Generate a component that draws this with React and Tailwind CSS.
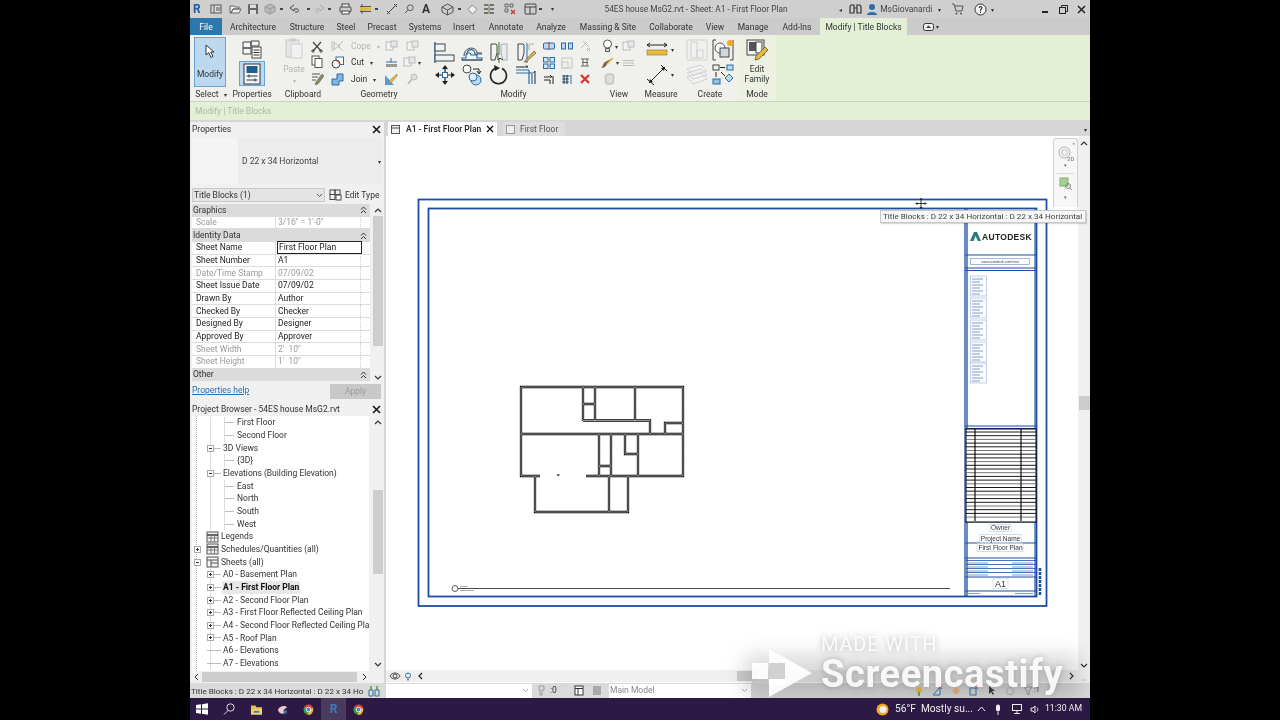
import React from "react";

const Svg = ({ w = 16, h = 16, vb, children, className = "" }) => (
  <svg width={w} height={h} viewBox={vb || `0 0 ${w} ${h}`} fill="none" className={className}>{children}</svg>
);
const Drop = () => <span className="text-[6px] leading-none text-[#333]">▾</span>;
const Dot = () => <span className="block h-[2px] w-[3px] bg-[#444]" />;

/* ---------- quick access icons ---------- */
const qa = {
  info: <Svg w={12} h={12}><rect x="1" y="2" width="10" height="8" stroke="#555" fill="#ddd" /><path d="M4 2v8M6 5h4M6 7h4" stroke="#555" /></Svg>,
  open: <Svg w={13} h={12}><path d="M1 3h4l1 1h4v2H4L2 10H1zM2 10l2-4h8l-2 4z" stroke="#666" fill="#eee" /></Svg>,
  save: <Svg w={12} h={12}><rect x="1" y="1" width="10" height="10" rx="1" fill="#666" /><rect x="3" y="1.500" width="6" height="3.500" fill="#ddd" /><rect x="3" y="7" width="6" height="4" fill="#ddd" /></Svg>,
  sync: <Svg w={12} h={12}><path d="M6 1l5 2.500v5L6 11 1 8.500v-5z" fill="#bbb" stroke="#999" /><path d="M1 3.500 6 6l5-2.500M6 6v5" stroke="#999" /></Svg>,
  undo: <Svg w={12} h={12}><path d="M5 2 1 5l4 3V6h3c2 0 2 3 0 3H6" stroke="#444" /></Svg>,
  redo: <Svg w={12} h={12}><path d="M7 2l4 3-4 3V6H4c-2 0-2 3 0 3h2" stroke="#aaa" /></Svg>,
  print: <Svg w={13} h={12}><rect x="3" y="1" width="7" height="4" stroke="#444" fill="#eee" /><rect x="1" y="4" width="11" height="5" rx="1" stroke="#444" fill="#ccc" /><rect x="3" y="8" width="7" height="3" stroke="#444" fill="#fff" /></Svg>,
  thin: <Svg w={13} h={10}><path d="M1 2.500h11M1 7.500h11M3 0v10" stroke="#555" /><rect x="1" y="3.500" width="11" height="3" fill="#e0b83a" /></Svg>,
  dim: <Svg w={12} h={12}><path d="M1 11 11 1M1 8l3 3M8 1l3 3" stroke="#444" /></Svg>,
  tag: <Svg w={12} h={12}><circle cx="7.500" cy="4.500" r="3.500" stroke="#444" /><path d="M5 7l-4 4" stroke="#444" /></Svg>,
  home: <Svg w={13} h={13}><path d="M6.500 1 12 4v5l-5.500 3L1 9V4z" stroke="#555" fill="#ccc" /><path d="M1 4l5.500 3L12 4M6.500 7v5" stroke="#555" /></Svg>,
  sec: <Svg w={11} h={11}><path d="M5.500 1 10 5.500 5.500 10 1 5.500z" stroke="#888" fill="#eee" /></Svg>,
  thinb: <Svg w={12} h={12}><path d="M1 2h4M1 6h4M1 10h4M7 2h4M7 6h4M7 10h4" stroke="#555" strokeWidth="1.600" /><path d="M6 1v10" stroke="#5a8a3c" /></Svg>,
  closew: <Svg w={13} h={12}><path d="M1 1h3v3H1zM6 1h3v3H6zM1 6h3v3H1z" stroke="#666" /><path d="M7 7l4 4m0-4-4 4" stroke="#c33" strokeWidth="1.300" /></Svg>,
  swit: <Svg w={13} h={12}><rect x="1" y="1" width="11" height="10" rx="1" stroke="#444" /><path d="M1 4h11M6 4v7" stroke="#444" /></Svg>,
};

/* ---------- ribbon icons ---------- */
const Cursor = () => <Svg w={12} h={15}><path d="M2 1v10l2.700-2.300L7 13.500l2-1L6.700 8H10z" fill="#fff" stroke="#333" /></Svg>;
const TypeProps = () => <Svg w={22} h={20}><path d="M2 3h8v6H2zM2 9h8v6H2zM10 2h8v5h-8z" stroke="#444" fill="#f4f4f4" /><rect x="11" y="8" width="9" height="11" stroke="#444" fill="#fff" /><path d="M12.500 11h6M12.500 13.500h6M12.500 16h6" stroke="#333" /></Svg>;
const PropsBig = () => <Svg w={18} h={22}><rect x="1" y="1" width="16" height="20" stroke="#333" fill="#f4f7fa" /><rect x="3.500" y="3" width="11" height="7" fill="#1f5f8b" /><path d="M3.500 13h11M3.500 17h11" stroke="#333" /><path d="M6 11.500v3M12 15.500v3" stroke="#333" /></Svg>;
const Paste = () => <Svg w={18} h={21}><rect x="1" y="2" width="13" height="17" stroke="#c9c9c9" fill="#e6e6e6" /><rect x="6" y="6" width="11" height="14" stroke="#cfcfcf" fill="#f1f1f1" /><rect x="4" y="0.500" width="7" height="3" fill="#ccc" /></Svg>;
const Scissors = ({ c = "#444" }) => <Svg w={12} h={12}><path d="M2 1l8 9M10 1l-8 9" stroke={c} strokeWidth="1.200" /><circle cx="2" cy="10" r="1.200" stroke={c} /><circle cx="10" cy="10" r="1.200" stroke={c} /></Svg>;
const Copy = () => <Svg w={12} h={13}><rect x="1" y="1" width="7" height="9" stroke="#555" fill="#fff" /><rect x="4" y="3.500" width="7" height="9" stroke="#555" fill="#fff" /></Svg>;
const Match = () => <Svg w={13} h={13}><path d="M1 2h8M1 5h6M1 8h4" stroke="#555" /><path d="M11 2 5 10l-1 3 3-1 6-8z" fill="#8a8a5a" stroke="#555" strokeWidth="0.500" /></Svg>;
const Cope = () => <Svg w={13} h={12}><path d="M1 1v10M3 1v10M3 3l6 3-6 3M12 1 7 6l5 5" stroke="#bdbdbd" /></Svg>;
const CutG = () => <Svg w={13} h={13}><rect x="5" y="1" width="7.500" height="7.500" stroke="#2e6da4" fill="#fff" /><circle cx="5" cy="8" r="4" stroke="#444" fill="#fff" /><path d="M5 5h3v3" stroke="#c33" /></Svg>;
const JoinG = () => <Svg w={13} h={13}><path d="M6 1h6v7H8v4H1V6h5z" fill="#7fb7e0" stroke="#2e6da4" /></Svg>;
const Small = ({ c = "#bbb" }) => <Svg w={13} h={12}><rect x="1" y="2" width="7" height="8" stroke={c} fill="#f3f3f3" /><rect x="6" y="1" width="6" height="6" stroke={c} fill="#e6e6e6" /></Svg>;
const Align = () => <Svg w={21} h={21}><path d="M1 0v21" stroke="#2a6aa5" strokeWidth="1.400" /><rect x="1" y="2" width="10" height="7" stroke="#444" fill="#eef3f7" /><rect x="1" y="13" width="19" height="6" stroke="#444" fill="#eef3f7" /></Svg>;
const Offset = () => <Svg w={22} h={18}><path d="M1 15h4v-3c0-3 5-3 5 0h6v3h5v2H1zM6 12c0-7 8-7 8-1h7" stroke="#2a6aa5" fill="#eef5fa" strokeWidth="1.100" /><path d="M1 17h20M3 13c0-10 13-10 13-3h5" stroke="#444" /></Svg>;
const Mirror1 = () => <Svg w={20} h={21}><path d="M2 2h5l1 1v8l-2 7H2z" stroke="#444" fill="#f3f3f3" /><path d="M10 0v21" stroke="#5a9a4a" strokeWidth="1.300" /><path d="M18 2h-5l-1 1v8l2 7h4z" stroke="#aaa" fill="#e6edf3" /><path d="M9 11v7l2-2 3 2" stroke="#333" fill="#fff" /></Svg>;
const Mirror2 = () => <Svg w={20} h={21}><path d="M2 2h5l1 1v8l-2 7H2z" stroke="#444" fill="#f3f3f3" /><path d="M11 1v20" stroke="#2a6aa5" /><path d="M18 2h-4l-1 1v5" stroke="#aaa" /><path d="M8 20l10-11 2 2-10 9z" fill="#e8b93a" stroke="#555" strokeWidth="0.700" /></Svg>;
const Move = () => <Svg w={22} h={22}><path d="M11 1l3 4H8zM11 21l3-4H8zM1 11l4-3v6zM21 11l-4-3v6z" fill="#222" /><path d="M11 5v12M5 11h12" stroke="#222" strokeWidth="1.200" /><rect x="8.500" y="8.500" width="5" height="5" fill="#fff" stroke="#2a6aa5" /></Svg>;
const CopyM = () => <Svg w={22} h={22}><circle cx="6" cy="5" r="4" stroke="#444" fill="#fff" /><path d="M12 5h6v4M16 7l2 3 2-3" stroke="#222" /><circle cx="15" cy="16" r="5" stroke="#2a6aa5" fill="#bcd9f0" /><circle cx="12" cy="13" r="4" stroke="#2a6aa5" fill="#e0eef9" /></Svg>;
const Rotate = () => <Svg w={20} h={22}><path d="M6 4.500a8 8 0 1 0 7 0" stroke="#222" strokeWidth="1.500" /><path d="M5 1l6 3-5 3z" fill="#222" /></Svg>;
const Trim = () => <Svg w={22} h={20}><path d="M1 5h13M1 8h16v11M14 5v14" stroke="#2a6aa5" strokeWidth="1.200" /><path d="M1 2h12l-2-1.500M20 19V6l-1.500 2" stroke="#222" /></Svg>;
const Mini = ({ k }) => {
  const m = {
    split: <Svg w={12} h={8}><rect x="0.500" y="1" width="11" height="6" rx="1" fill="#bcd9f0" stroke="#2a6aa5" /><path d="M6 0v8" stroke="#c33" /></Svg>,
    gap: <Svg w={12} h={8}><rect x="0.500" y="1" width="4" height="6" fill="#bcd9f0" stroke="#2a6aa5" /><rect x="7.500" y="1" width="4" height="6" fill="#bcd9f0" stroke="#2a6aa5" /></Svg>,
    pin: <Svg w={12} h={12}><path d="M4 1l6 6M8 2 2 8" stroke="#bbb" /><path d="M8 8l3 3m0-3-3 3" stroke="#d8a0a0" /></Svg>,
    arr: <Svg w={12} h={12}><rect x="0.500" y="0.500" width="4.500" height="4.500" stroke="#2a6aa5" fill="#d6e8f6" /><rect x="7" y="0.500" width="4.500" height="4.500" stroke="#2a6aa5" fill="#d6e8f6" /><rect x="0.500" y="7" width="4.500" height="4.500" stroke="#2a6aa5" fill="#d6e8f6" /><rect x="7" y="7" width="4.500" height="4.500" stroke="#2a6aa5" fill="#d6e8f6" /></Svg>,
    scale: <Svg w={12} h={12}><rect x="1" y="1" width="10" height="10" stroke="#c5c5c5" /><rect x="1" y="5" width="6" height="6" stroke="#c5c5c5" fill="#eee" /></Svg>,
    pinn: <Svg w={12} h={11}><path d="M2 2h8M2 9h8M3 5.500h6M4 2v7M8 2v7" stroke="#666" /></Svg>,
    unp: <Svg w={12} h={11}><path d="M1 3h8l-2-2M1 6h6v4M10 2v8" stroke="#222" /></Svg>,
    ung: <Svg w={12} h={11}><path d="M1 2h10M1 5h7M1 8h7M10 3v7" stroke="#2a6aa5" /><path d="M3 1v9M6 1v9" stroke="#222" /></Svg>,
    del: <Svg w={10} h={10}><path d="M1 1l8 8M9 1 1 9" stroke="#d8322e" strokeWidth="2.200" /></Svg>,
  };
  return m[k];
};
const Bulb = () => <Svg w={11} h={14}><circle cx="5.500" cy="5" r="4" stroke="#555" fill="#fff" /><path d="M3.500 9.500h4v3h-4z" stroke="#555" fill="#ddd" /></Svg>;
const Brush = () => <Svg w={14} h={12}><path d="M13 1 7 7 5 5zM5 5l2 2c-1 3-4 4-6 4 2-1 2-5 4-6z" fill="#7a6a3a" /><path d="M13 1 7 7" stroke="#e0b83a" strokeWidth="1.500" /></Svg>;
const Clip = () => <Svg w={11} h={12}><rect x="1.500" y="1" width="8" height="10" rx="3" stroke="#c4c4c4" strokeWidth="1.500" fill="#ddd" /></Svg>;
const Tape = () => <Svg w={22} h={15}><path d="M1 3h20M1 3l3-2M1 3l3 2M21 3l-3-2M21 3l-3 2" stroke="#222" /><rect x="1" y="8" width="20" height="5" fill="#e8bb3e" stroke="#8a7420" strokeWidth="0.600" /></Svg>;
const DimIcon = () => <Svg w={22} h={22}><path d="M3 19 19 3M1 15l7 6M15 1l6 6" stroke="#222" /><path d="M3 19l1-4 3 3zM19 3l-1 4-3-3z" fill="#222" /></Svg>;
const Create1 = () => <Svg w={22} h={22}><rect x="1" y="1" width="20" height="20" rx="1" stroke="#d0d0d0" /><path d="M5 3h6v16H5zM11 11h6v8h-6z" stroke="#cfcfcf" fill="#f1f1f1" /></Svg>;
const Create2 = () => <Svg w={22} h={22}><path d="M4 1H1v20h3M18 21h3V1" stroke="#444" /><circle cx="8" cy="9" r="5" stroke="#555" fill="#fff" /><rect x="8" y="9" width="9" height="9" fill="#cfd8df" stroke="#444" /><circle cx="18" cy="4" r="3" fill="#f2a81d" /></Svg>;
const Create3 = () => <Svg w={24} h={24}><path d="M2 6l14-4 6 6-14 4zM2 10l14-4 6 6-14 4zM2 14l14-4 6 6-14 5z" stroke="#d0d0d0" fill="#f1f1f1" /></Svg>;
const Create4 = () => <Svg w={22} h={22}><rect x="1" y="1" width="6" height="5" stroke="#444" /><path d="M8 3.500h5" stroke="#222" /><rect x="15" y="1" width="6" height="5" stroke="#2a6aa5" fill="#bcd9f0" /><path d="M4 8v5M9 8l4 4" stroke="#222" /><rect x="1" y="15" width="7" height="5" fill="#8fc1e6" stroke="#2a6aa5" /><path d="M17 10l4 4-4 4-4-4z" fill="#bcd9f0" stroke="#2a6aa5" /></Svg>;
const EditFam = () => <Svg w={22} h={22}><rect x="1" y="1" width="17" height="15" stroke="#444" fill="#f3f3f3" /><rect x="3" y="3" width="7" height="9" fill="#555" /><rect x="10" y="3" width="6" height="11" stroke="#444" fill="#fff" /><path d="M9 21l1-4 9-9 3 3-9 9z" fill="#e8bb3e" stroke="#444" strokeWidth="0.700" /></Svg>;

const Cell = ({ children, className = "" }) => <div className={`flex items-center justify-center ${className}`}>{children}</div>;

const Panel = ({ className, label, children, labelNode }) => (
  <div className={`flex flex-col ${className}`}>
    <div className="flex h-[52px] min-w-0 pt-[2px]">{children}</div>
    <div className="flex h-[14px] items-center justify-center text-[8.500px] text-[#333]">{labelNode || label}</div>
  </div>
);

const SmallRow = ({ icon, text, gray, drop }) => (
  <div className={`flex h-[16.500px] items-center gap-[6px] text-[8.500px] ${gray ? "text-[#b5b5b5]" : "text-[#333]"}`}>
    <Cell className="w-[15px]">{icon}</Cell>
    <span>{text}</span>
    {drop && <span className="text-[6px]">▾</span>}
  </div>
);

const tabs = [
  ["Architecture", "w-[54px]"], ["Structure", "w-[54px]"], ["Steel", "w-[24px]"], ["Precast", "w-[48px]"], ["Systems", "w-[38px]"], ["Insert", "w-[40px]"],
  ["Annotate", "w-[44px]"], ["Analyze", "w-[46px]"], ["Massing & Site", "w-[68px]"], ["Collaborate", "w-[58px]"], ["View", "w-[30px]"], ["Manage", "w-[46px]"], ["Add-Ins", "w-[42px]"],
];

const propRows = [
  ["h", "Graphics"],
  ["r", "Scale", "3/16\" = 1'-0\"", true],
  ["h", "Identity Data"],
  ["e", "Sheet Name", "First Floor Plan"],
  ["r", "Sheet Number", "A1"],
  ["r", "Date/Time Stamp", "07/09/02", true],
  ["r", "Sheet Issue Date", "07/09/02"],
  ["r", "Drawn By", "Author"],
  ["r", "Checked By", "Checker"],
  ["r", "Designed By", "Designer"],
  ["r", "Approved By", "Approver"],
  ["r", "Sheet Width", "2'  10\"", true],
  ["r", "Sheet Height", "1'  10\"", true],
  ["h", "Other"],
];

const Chev = () => <Svg w={7} h={8}><path d="M1 3.500 3.500 1 6 3.500M1 7 3.500 4.500 6 7" stroke="#333" /></Svg>;
const Up = () => <Svg w={8} h={6}><path d="M1 5 4 2l3 3" stroke="#333" strokeWidth="1.200" /></Svg>;
const Down = () => <Svg w={8} h={6}><path d="M1 1l3 3 3-3" stroke="#333" strokeWidth="1.200" /></Svg>;
const X = () => <Svg w={9} h={9}><path d="M1 1l7 7M8 1 1 8" stroke="#111" strokeWidth="1.500" /></Svg>;

const Plus = ({ minus }) => (
  <span className="relative flex h-[7px] w-[7px] items-center justify-center border border-[#aaa] bg-white">
    <span className="h-px w-[3px] bg-[#333]" />
    {!minus && <span className="absolute h-[3px] w-px bg-[#333]" />}
  </span>
);

const tree = [
  [1, "First Floor", 3, null],
  [2, "Second Floor", 3, null],
  [3, "3D Views", 2, "m"],
  [4, "{3D}", 3, null],
  [5, "Elevations (Building Elevation)", 2, "m"],
  [6, "East", 3, null],
  [7, "North", 3, null],
  [8, "South", 3, null],
  [9, "West", 3, null],
  [10, "Legends", 1, null, "leg"],
  [11, "Schedules/Quantities (all)", 1, "p", "sch"],
  [12, "Sheets (all)", 1, "m", "sht"],
  [13, "A0 - Basement Plan", 2, "p"],
  [14, "A1 - First Floor Plan", 2, "p", null, true],
  [15, "A2 - Second Floor Plan", 2, "p"],
  [16, "A3 - First Floor Reflected Ceiling Plan", 2, "p"],
  [17, "A4 - Second Floor Reflected Ceiling Plan", 2, "p"],
  [18, "A5 - Roof Plan", 2, "p"],
  [19, "A6 - Elevations", 2, null],
  [20, "A7 - Elevations", 2, null],
];

const TreeIcon = ({ k }) => (
  <Svg w={13} h={12}>
    <rect x="1" y="1" width="11" height="10" stroke="#555" fill="#f3f3f3" />
    <path d="M1 4h11" stroke="#555" strokeWidth={k === "sht" ? 1 : 1.800} />
    {k !== "sht" && <path d="M1 7h11M5 4v7M8.500 4v7" stroke="#777" />}
    {k === "sht" && <path d="M5 4v7M5 7h7" stroke="#555" />}
  </Svg>
);

const wall =
  "M540 476H521V387H683V476H586 M535 476V512H628V476 M609 476V512 M583 387V421 M595 387V421 M583 404H595 M635 387V421 M583 420.500H650V434 M521 434H683 M665 434V423H683 M599 434V476 M611 434V476 M599 466H611 M625 434V454H638 M638 434V476";

const Rows = () => {
  const ys = [];
  for (let y = 432; y < 520; y += 3.7) ys.push(y);
  return ys.map((y, i) => <path key={i} d={`M966 ${y}H1036`} stroke={i % 3 === 2 ? "#666" : "#000"} strokeWidth="0.900" />);
};

const Sheet = () => (
  <svg width="692" height="532" viewBox="386 136 692 532" className="block" fontFamily="Liberation Sans, sans-serif">
    <rect x="418.500" y="199.500" width="628" height="406.500" stroke="#1d4ea3" strokeWidth="1.800" fill="#fff" />
    <rect x="428.500" y="208.500" width="608" height="388" stroke="#1d4ea3" strokeWidth="1.800" fill="none" />
    <path d="M965 208.500V597M967 208.500V597" stroke="#1d4ea3" strokeWidth="1.300" />
    <path d="M965 255H1037M965 268H1037M965 270.500H1037M965 426H1037M965 428.500H1037M965 522H1037M965 543H1037M965 558H1037M965 577H1037M965 591H1037M1035 208.500V597" stroke="#1d4ea3" strokeWidth="1.100" />
    <path d="M970 241l4-9h3l4 9h-3l-2.500-5-2 5z" fill="#2a7a7a" />
    <text x="982" y="239.500" fontSize="8.500" fontWeight="700" fill="#222" letterSpacing="0.300">AUTODESK</text>
    <rect x="970.500" y="258.500" width="59" height="6" fill="#fff" stroke="#7a9fd0" strokeWidth="0.700" />
    <text x="1000" y="263" fontSize="3.500" textAnchor="middle" fill="#345">www.autodesk.com/revit</text>
    {[276, 298, 320, 342, 363].map((y) => (
      <g key={y}>
        <rect x="970.500" y={y} width="16" height="20" fill="#f8fbff" stroke="#9ab5da" strokeWidth="0.600" />
        {[3, 6, 9, 12, 15, 18].map((d) => <path key={d} d={`M972 ${y + d}H${980 + (d % 2) * 3}`} stroke="#5a79a8" strokeWidth="0.700" />)}
      </g>
    ))}
    <rect x="966" y="429" width="70" height="93" fill="#fff" stroke="#000" strokeWidth="1" />
    <Rows />
    <path d="M975 429V521M1021 429V521" stroke="#000" strokeWidth="1.100" />
    <rect x="990" y="524.500" width="21" height="7" fill="#fff" stroke="#b5c6e0" strokeWidth="0.600" />
    <text x="1000.500" y="530" fontSize="6.500" textAnchor="middle" fill="#334">Owner</text>
    <rect x="980" y="534.500" width="41" height="8" fill="#fff" stroke="#b5c6e0" strokeWidth="0.600" />
    <text x="1000.500" y="541" fontSize="6.500" textAnchor="middle" fill="#334">Project Name</text>
    <rect x="977" y="543.500" width="46" height="8" fill="#fff" stroke="#b5c6e0" strokeWidth="0.600" />
    <text x="1000.500" y="549.500" fontSize="6.500" textAnchor="middle" fill="#334">First Floor Plan</text>
    {[563, 567, 571, 575].map((y) => (
      <g key={y}>
        <path d={`M966 ${y - 2.500}H1036`} stroke="#1d4ea3" strokeWidth="0.800" />
        <path d={`M968 ${y}H988M1012 ${y}H1033`} stroke="#7a9fd0" strokeWidth="1" />
      </g>
    ))}
    <rect x="993" y="578.500" width="15" height="10" fill="#fff" stroke="#c5d3e8" strokeWidth="0.600" />
    <text x="1000.500" y="587" fontSize="9" textAnchor="middle" fill="#334">A1</text>
    <path d="M968 593.500H980M1015 593.500H1033" stroke="#7a9fd0" strokeWidth="1" />
    <path d="M1040 568v28" stroke="#1d4ea3" strokeWidth="2.600" strokeDasharray="3 1" />
    <path d="M452 588.500H950" stroke="#333" strokeWidth="0.900" />
    <circle cx="455" cy="588.500" r="3" fill="#fff" stroke="#333" strokeWidth="0.800" />
    <path d="M460 586.500h8M460 590.500h14" stroke="#999" strokeWidth="0.800" />
    <path d={wall} stroke="#000" strokeWidth="2.300" fill="none" />
    <path d={wall} stroke="#fff" strokeWidth="0.600" fill="none" />
    <rect x="557" y="474" width="2.500" height="2" fill="#666" />
    <path d="M921 198v11M915.500 203.500h11" stroke="#222" strokeWidth="0.900" />
    <path d="M921 198l-1.500 2h3zM921 209l-1.500-2h3zM915.500 203.500l2-1.500v3zM926.500 203.500l-2-1.500v3z" fill="#222" />
  </svg>
);

const Logo = () => (
  <Svg w={64} h={50}>
    <path d="M19 0 62 24 19 48z" fill="#fff" fillOpacity="0.92" />
    <rect x="2" y="14" width="16" height="16" fill="#fff" fillOpacity="0.92" />
    <rect x="2" y="30" width="16" height="6" fill="#bdbdbd" fillOpacity="0.8" />
    <path d="M19 14h16v16H19z" fill="#c9c9c9" fillOpacity="0.85" />
    <path d="M35 30H19v6h16z" fill="#fff" />
  </Svg>
);

const Chrome = () => (
  <Svg w={11} h={11}>
    <circle cx="5.500" cy="5.500" r="5" fill="#d8473a" />
    <path d="M5.500 5.500 1 3v5l2.500 2.500 2 0z" fill="#3d9c52" />
    <path d="M5.500 5.500 10 4v3l-2 3.500-3 .5z" fill="#e8b93a" />
    <circle cx="5.500" cy="5.500" r="2.300" fill="#4a86c8" stroke="#fff" strokeWidth="0.800" />
  </Svg>
);

export default function App() {
  return (
    <div className="flex h-[720px] w-[1280px] overflow-hidden bg-black font-['Roboto','Noto_Sans',sans-serif] text-[8.500px] text-[#333]">
      <div className="w-[190px] shrink-0 bg-black" />
      <div className="relative flex w-[900px] shrink-0 flex-col overflow-hidden bg-white blur-[0.3px]">
        {/* Title bar */}
        <div className="flex h-[18px] shrink-0 items-center bg-[#cfcfcf]">
          <div className="flex w-[415px] items-center pl-[3px]">
            <span className="w-[17px] text-[12px] font-bold leading-none text-[#1e5c9e]">R</span>
            <Cell className="w-[12px]">{qa.info}</Cell>
            <Cell className="ml-[5px] w-[17px]">{qa.open}</Cell>
            <Cell className="w-[17px]">{qa.save}</Cell>
            <Cell className="w-[17px]">{qa.sync}</Cell>
            <Cell className="w-[7px]"><Dot /></Cell>
            <Cell className="w-[20px]">{qa.undo}</Cell>
            <Cell className="w-[7px]"><Dot /></Cell>
            <Cell className="w-[14px]">{qa.redo}</Cell>
            <Cell className="w-[7px]"><Dot /></Cell>
            <Cell className="w-[24px]">{qa.print}</Cell>
            <Cell className="w-[16px]">{qa.thin}</Cell>
            <Cell className="w-[7px]"><Dot /></Cell>
            <Cell className="w-[24px]">{qa.dim}</Cell>
            <Cell className="w-[10px]">{qa.tag}</Cell>
            <span className="w-[24px] text-center text-[12px] font-bold leading-none text-[#333]">A</span>
            <Cell className="w-[18px]">{qa.home}</Cell>
            <Cell className="w-[7px]"><Dot /></Cell>
            <Cell className="w-[18px]">{qa.sec}</Cell>
            <Cell className="w-[16px]">{qa.thinb}</Cell>
            <Cell className="w-[26px]">{qa.closew}</Cell>
            <Cell className="w-[14px]">{qa.swit}</Cell>
            <Cell className="w-[7px]"><Dot /></Cell>
            <Cell className="w-[16px]"><Drop /></Cell>
          </div>
          <span className="w-[235px] whitespace-nowrap text-[8.300px] text-[#444]">54ES house MsG2.rvt - Sheet: A1 - First Floor Plan</span>
          <span className="w-[10px] text-[6px]">◂</span>
          <Svg w={13} h={12}><path d="M1 10V4l1-2h3v8zM8 10V2h3l1 2v6zM5 5h3" stroke="#333" strokeWidth="1.200" /></Svg>
          <Cell className="ml-[3px] w-[13px]"><Svg w={12} h={13}><circle cx="6" cy="4" r="3" fill="#2e6da4" /><path d="M1 12c0-4 10-4 10 0z" fill="#2e6da4" /></Svg></Cell>
          <span className="ml-[2px] w-[58px] text-[8.500px] text-[#444]">MsGiovanardi</span>
          <span className="w-[10px] text-[6px]">▾</span>
          <Cell className="ml-[3px] w-[13px]"><Svg w={13} h={12}><path d="M1 1h2l2 7h6l1-5H4" stroke="#555" /><circle cx="5.500" cy="10.500" r="1" fill="#555" /><circle cx="10" cy="10.500" r="1" fill="#555" /></Svg></Cell>
          <Cell className="ml-[9px] w-[14px]"><Svg w={13} h={13}><circle cx="6.500" cy="6.500" r="5.500" stroke="#333" fill="#f1f1f1" /><text x="6.500" y="9.500" fontSize="8.500" fontWeight="700" textAnchor="middle" fill="#333">?</text></Svg></Cell>
          <span className="ml-[4px] w-[45px] text-[6px]">▾</span>
          <Cell className="w-[18px]"><span className="mt-[6px] h-[2px] w-[6px] bg-[#222]" /></Cell>
          <Cell className="w-[18px]"><Svg w={9} h={9}><rect x="0.500" y="2.500" width="6" height="6" stroke="#222" /><path d="M2.500 2.500v-2h6v6h-2" stroke="#222" /></Svg></Cell>
          <Cell className="w-[18px]"><Svg w={9} h={9}><path d="M1 1l7 7M8 1 1 8" stroke="#222" strokeWidth="1.500" /></Svg></Cell>
        </div>

        {/* Tabs */}
        <div className="flex h-[17px] shrink-0 items-stretch bg-[#cbcbcb] text-[8.500px]">
          <div className="flex w-[32px] items-center justify-center bg-[#2a78ae] pt-[1px] text-white">File</div>
          <div className="w-[4px]" />
          {tabs.map(([t, w]) => (
            <div key={t} className={`flex items-center justify-center whitespace-nowrap pt-[1px] text-[#333] ${w}`}>{t}</div>
          ))}
          <div className="ml-[2px] flex w-[87px] items-center justify-center whitespace-nowrap bg-[#e3f0d6] pt-[1px] text-[#333]">Modify | Title Blocks</div>
          <div className="ml-[16px] flex items-center gap-[2px]">
            <Svg w={11} h={8}><rect x="0.500" y="0.500" width="10" height="7" rx="2" stroke="#333" fill="#eee" /><path d="M3 5h5L5.500 2.500z" fill="#333" /></Svg>
            <span className="text-[6px]">▾</span>
          </div>
        </div>

        {/* Ribbon */}
        <div className="flex h-[67px] shrink-0 border-b border-[#c9d3bf] bg-[#e3f0d6]">
          <div className="flex w-[548px] bg-[#f0f1ed]">
            <Panel className="ml-[4px] w-[34px]" labelNode={<span>Select <span className="ml-[3px] text-[6px]">▾</span></span>}>
              <div className="flex h-[50px] w-[32px] flex-col items-center border border-[#6aa3d5] bg-[#bcd9f0] pt-[6px] text-[8.500px]">
                <Cursor />
                <span className="mt-[9px]">Modify</span>
              </div>
            </Panel>
            <Panel className="ml-[3px] w-[42px]" label="Properties">
              <div className="flex w-full flex-col items-center">
                <Cell className="h-[24px]"><TypeProps /></Cell>
                <div className="flex h-[25px] w-[26px] items-center justify-center border border-[#6aa3d5] bg-[#bcd9f0]"><PropsBig /></div>
              </div>
            </Panel>
            <Panel className="ml-[7px] w-[46px]" label="Clipboard">
              <div className="flex w-[28px] flex-col items-center text-[#b5b5b5]">
                <Cell className="h-[22px]"><Paste /></Cell>
                <span className="mt-[4px] text-[8.500px]">Paste</span>
                <span className="text-[6px]">▾</span>
              </div>
              <div className="flex w-[18px] flex-col items-center">
                <Cell className="h-[16.500px] pt-[3px]"><Scissors /></Cell>
                <Cell className="h-[16.500px]"><Copy /></Cell>
                <Cell className="h-[16.500px]"><Match /></Cell>
              </div>
            </Panel>
            <Panel className="ml-[4px] w-[98px]" label="Geometry">
              <div className="w-[52px] pt-[1px]">
                <SmallRow icon={<Cope />} text="Cope" gray drop />
                <SmallRow icon={<CutG />} text="Cut" drop />
                <SmallRow icon={<JoinG />} text="Join" drop />
              </div>
              <div className="w-[18px] pt-[1px]">
                <Cell className="h-[16.500px]"><Small /></Cell>
                <Cell className="h-[16.500px]"><Svg w={13} h={12}><path d="M1 5h11M6 1v4" stroke="#2a6aa5" /><rect x="1" y="7" width="11" height="3" fill="#999" /></Svg></Cell>
                <Cell className="h-[16.500px]"><Svg w={14} h={13}><path d="M1 12V2l9 10z" fill="#5a9bd5" /><path d="M13 1 5 8v2h2l6-7z" fill="#e8b93a" stroke="#666" strokeWidth="0.500" /></Svg></Cell>
              </div>
              <div className="flex w-[24px] flex-col pt-[1px]">
                <Cell className="h-[16.500px]"><Small /></Cell>
                <Cell className="h-[16.500px] gap-[2px]"><Small /><span className="text-[6px]">▾</span></Cell>
                <Cell className="h-[16.500px]"><Svg w={12} h={12}><circle cx="8" cy="4" r="3" stroke="#bbb" fill="#ddd" /><path d="M6 6l-4 5" stroke="#bbb" strokeWidth="1.800" /></Svg></Cell>
              </div>
            </Panel>
            <Panel className="ml-[3px] w-[165px]" label="Modify">
              <div className="grid w-[109px] shrink-0 grid-cols-4 grid-rows-2 pt-[2px]">
                <Cell className="h-[26px]"><Align /></Cell><Cell className="h-[26px]"><Offset /></Cell><Cell className="h-[26px]"><Mirror1 /></Cell><Cell className="h-[26px]"><Mirror2 /></Cell>
                <Cell className="h-[24px]"><Move /></Cell><Cell className="h-[24px]"><CopyM /></Cell><Cell className="h-[24px]"><Rotate /></Cell><Cell className="h-[24px]"><Trim /></Cell>
              </div>
              <div className="grid w-[54px] shrink-0 grid-cols-3 pt-[1px]">
                {["split", "gap", "pin", "arr", "scale", "pinn", "unp", "ung", "del"].map((k) => (
                  <Cell key={k} className="h-[16.500px]"><Mini k={k} /></Cell>
                ))}
              </div>
            </Panel>
            <Panel className="ml-[4px] w-[38px]" label="View">
              <div className="grid w-full grid-cols-2 pt-[1px]">
                <Cell className="h-[16.500px] gap-[2px]"><Bulb /><span className="text-[6px]">▾</span></Cell>
                <Cell className="h-[16.500px]"><Small /></Cell>
                <Cell className="h-[16.500px] gap-[2px]"><Brush /><span className="text-[6px]">▾</span></Cell>
                <Cell className="h-[16.500px]"><Svg w={13} h={8}><path d="M1 1.500h11M1 4h11M1 6.500h11" stroke="#bbb" /></Svg></Cell>
                <Cell className="h-[16.500px]"><Clip /></Cell>
              </div>
            </Panel>
            <Panel className="ml-[4px] w-[38px]" label="Measure">
              <div className="flex flex-col pl-[4px]">
                <div className="flex h-[25px] items-center gap-[3px]"><Tape /><span className="text-[6px]">▾</span></div>
                <div className="flex h-[25px] items-center gap-[3px]"><DimIcon /><span className="text-[6px]">▾</span></div>
              </div>
            </Panel>
            <Panel className="ml-[4px] w-[52px]" label="Create">
              <div className="grid w-full grid-cols-2 justify-items-center">
                <Cell className="h-[25px]"><Create1 /></Cell><Cell className="h-[25px]"><Create2 /></Cell>
                <Cell className="h-[25px]"><Create3 /></Cell><Cell className="h-[25px]"><Create4 /></Cell>
              </div>
            </Panel>
          </div>
          <Panel className="w-[38px] bg-[#ecf1e4]" label="Mode">
            <div className="flex w-full flex-col items-center text-[8.500px] leading-[10px]">
              <Cell className="h-[25px]"><EditFam /></Cell>
              <span className="mt-[2px]">Edit</span>
              <span>Family</span>
            </div>
          </Panel>
        </div>

        {/* Context bar */}
        <div className="flex h-[18px] shrink-0 items-center bg-[#e3f0d6] pl-[5px] text-[8.500px] text-[#b3b3a8]">Modify | Title Blocks</div>

        {/* Body */}
        <div className="flex min-h-0 flex-1 bg-[#d6d6d6] pt-[2px]">
          {/* Left column */}
          <div className="flex w-[194px] shrink-0 flex-col">
            <div className="flex h-[281px] flex-col bg-[#f0f0f0]">
              <div className="flex h-[14px] items-center justify-between pl-[2px] pr-[3px] text-[8.500px]">
                <span>Properties</span><X />
              </div>
              <div className="mx-[2px] mt-[2px] flex h-[46px] items-center bg-[#ececec]">
                <div className="h-[46px] w-[46px] bg-[#f4f4f4]" />
                <span className="ml-[4px] flex-1 text-[8.500px] text-[#444]">D 22 x 34 Horizontal</span>
                <span className="mr-[1px] text-[6px]">▾</span>
              </div>
              <div className="mt-[4px] flex h-[14px] items-center">
                <div className="ml-[2px] flex h-[14px] w-[133px] items-center justify-between border border-[#c9c9c9] bg-[#e4e4e4] px-[1px] text-[8.500px]">
                  <span>Title Blocks (1)</span>
                  <Svg w={7} h={5}><path d="M1 1l2.500 2.500L6 1" stroke="#555" /></Svg>
                </div>
                <Cell className="ml-[4px] w-[13px]"><Svg w={13} h={12}><rect x="1" y="1" width="5" height="4.500" stroke="#444" /><rect x="6" y="1" width="5" height="4.500" stroke="#444" /><rect x="1" y="5.500" width="5" height="5" stroke="#444" /><rect x="7" y="6" width="5" height="5" stroke="#444" fill="#fff" /></Svg></Cell>
                <span className="ml-[3px] whitespace-nowrap text-[8.500px]">Edit Type</span>
              </div>
              <div className="mt-[2px] flex h-[180px]">
                <div className="ml-[2px] flex w-[178px] flex-col">
                  {propRows.map(([k, a, b, gray]) =>
                    k === "h" ? (
                      <div key={a} className="flex h-[12.670px] items-center justify-between bg-[#dbdbdb] pl-[1px] pr-[3px] text-[8.500px] text-[#333]">
                        <span>{a}</span><Chev />
                      </div>
                    ) : (
                      <div key={a} className={`flex h-[12.670px] items-center border-b border-[#dcdcdc] bg-white text-[8.500px] ${gray ? "text-[#9a9a9a]" : "text-[#222]"}`}>
                        <span className="w-[84px] whitespace-nowrap border-r border-[#dcdcdc] pl-[4px]">{a}</span>
                        {k === "e" ? (
                          <span className="ml-[1px] flex h-[12.670px] w-[85px] items-center border border-[#222] pl-[1px]">{b}</span>
                        ) : (
                          <span className="w-[85px] whitespace-pre border-r border-dotted border-[#ccc] pl-[2px]">{b}</span>
                        )}
                      </div>
                    )
                  )}
                </div>
                <div className="ml-[2px] flex w-[11px] flex-col items-center bg-[#f0f0f0]">
                  <Cell className="h-[12px]"><Up /></Cell>
                  <div className="h-[130px] w-[10px] bg-[#cdcdcd]" />
                  <div className="flex-1" />
                  <Cell className="h-[12px]"><Down /></Cell>
                </div>
              </div>
              <div className="flex h-[19px] items-start justify-between pl-[2px] pr-[3px]">
                <span className="text-[8.500px] leading-[13px] text-[#2a6fb0] underline">Properties help</span>
                <div className="flex h-[15px] w-[51px] items-center justify-center bg-[#c8c8c8] text-[8.500px] text-[#9c9c9c]">Apply</div>
              </div>
            </div>

            <div className="flex min-h-0 flex-1 flex-col bg-[#f0f0f0]">
              <div className="flex h-[13px] items-center justify-between pl-[2px] pr-[3px] text-[8.500px]">
                <span>Project Browser - 54ES house MsG2.rvt</span><X />
              </div>
              <div className="flex min-h-0 flex-1">
                <div className="relative ml-[2px] w-[177px] overflow-hidden bg-white pt-[0.500px]">
                  <div className="absolute bottom-0 left-[4px] top-0 w-px border-l border-dotted border-[#aaa]" />
                  {tree.map(([id, t, lvl, exp, ic, sel]) => (
                    <div key={id} className="relative flex h-[12.670px] items-center whitespace-nowrap text-[8.500px] text-[#333]">
                      {lvl >= 2 && <span className="absolute left-[18px] top-0 h-full w-px bg-[#dcdcdc]" />}
                      {lvl === 3 && <span className="absolute left-[32px] top-0 h-full w-px bg-[#dcdcdc]" />}
                      {lvl === 1 && (
                        <div className="flex items-center">
                          <Cell className="w-[11px]">{exp ? <Plus minus={exp === "m"} /> : null}</Cell>
                          <Cell className="ml-[2px] w-[14px]"><TreeIcon k={ic} /></Cell>
                          <span className="ml-[2px]">{t}</span>
                        </div>
                      )}
                      {lvl === 2 && (
                        <div className="relative ml-[15px] flex items-center">
                          <Cell className="w-[7px]">{exp ? <Plus minus={exp === "m"} /> : <span className="h-px w-[7px] bg-[#bbb]" />}</Cell>
                          <span className="h-px w-[7px] bg-[#bbb]" />
                          <span className={`ml-[1px] px-[1px] ${sel ? "bg-[#e8e8e8] font-bold text-[#111]" : ""}`}>{t}</span>
                        </div>
                      )}
                      {lvl === 3 && (
                        <div className="ml-[32px] flex items-center">
                          <span className="h-px w-[10px] bg-[#bbb]" />
                          <span className="ml-[3px]">{t}</span>
                        </div>
                      )}
                    </div>
                  ))}
                </div>
                <div className="ml-[3px] flex w-[11px] flex-col items-center">
                  <Cell className="h-[12px] w-full"><Up /></Cell>
                  <div className="mt-[62px] h-[84px] w-[10px] bg-[#cdcdcd]" />
                  <div className="flex-1" />
                  <Cell className="h-[12px] w-full"><Down /></Cell>
                </div>
              </div>
              <div className="flex h-[12px] items-center">
                <Cell className="w-[12px]"><Svg w={6} h={8}><path d="M5 1 2 4l3 3" stroke="#333" /></Svg></Cell>
                <div className="h-[10px] w-[155px] bg-[#cdcdcd]" />
                <Cell className="ml-[2px] w-[12px]"><Svg w={6} h={8}><path d="M1 1l3 3-3 3" stroke="#333" /></Svg></Cell>
              </div>
            </div>
          </div>

          {/* Canvas column */}
          <div className="ml-[2px] flex min-w-0 flex-1 flex-col">
            <div className="flex h-[14px] shrink-0 items-stretch bg-[#d6d6d6] text-[8.500px]">
              <div className="ml-[2px] flex w-[109px] items-center gap-[3px] bg-white px-[3px] font-medium text-[#222]">
                <Svg w={9} h={9}><rect x="0.500" y="0.500" width="8" height="8" stroke="#555" fill="#eee" /><path d="M1 3h7" stroke="#555" /></Svg>
                <span className="ml-[3px] flex-1 whitespace-nowrap">A1 - First Floor Plan</span>
                <Svg w={8} h={8}><path d="M1 1l6 6M7 1 1 7" stroke="#111" strokeWidth="1.300" /></Svg>
              </div>
              <div className="ml-[6px] flex w-[62px] items-center gap-[3px] bg-[#dedede] px-[3px] text-[#555]">
                <Svg w={9} h={9}><rect x="0.500" y="0.500" width="8" height="8" stroke="#999" fill="#eee" /></Svg>
                <span className="ml-[2px] whitespace-nowrap">First Floor</span>
              </div>
              <div className="flex-1" />
              <Cell className="w-[10px] text-[6px]">▾</Cell>
            </div>
            <div className="relative flex min-h-0 flex-1 bg-white">
              <div className="flex min-w-0 flex-1 flex-col">
                <div className="h-[532px] overflow-hidden"><Sheet /></div>
                <div className="mt-[2px] flex h-[12px] items-center bg-[#f0f0f0] pl-[3px]">
                  <Svg w={12} h={10}><path d="M1 5c2-4 8-4 10 0-2 4-8 4-10 0z" stroke="#444" /><circle cx="6" cy="5" r="2" stroke="#444" /></Svg>
                  <Cell className="ml-[3px] w-[8px]"><Svg w={6} h={9}><circle cx="3" cy="3.500" r="2.500" stroke="#2a6aa5" /><path d="M2 6.500h2v2H2z" fill="#888" /></Svg></Cell>
                  <Cell className="ml-[4px] w-[8px]"><Svg w={6} h={8}><path d="M5 1 2 4l3 3" stroke="#222" strokeWidth="1.200" /></Svg></Cell>
                  <div className="ml-[313px] h-[10px] w-[20px] bg-[#cdcdcd]" />
                  <div className="flex-1" />
                  <Cell className="mr-[2px] w-[8px]"><Svg w={6} h={8}><path d="M1 1l3 3-3 3" stroke="#333" strokeWidth="1.200" /></Svg></Cell>
                </div>
              </div>
              <div className="flex w-[12px] shrink-0 flex-col items-center bg-[#f0f0f0]">
                <Cell className="h-[14px]"><Up /></Cell>
                <div className="mt-[246px] h-[14px] w-[11px] bg-[#cdcdcd]" />
                <div className="flex-1" />
                <Cell className="h-[22px]"><Down /></Cell>
                <Cell className="h-[6px]"><span className="h-[2px] w-[5px] bg-[#ddd]" /></Cell>
              </div>
              {/* Navigation bar */}
              <div className="absolute right-[12px] top-[2px] flex h-[69px] w-[25px] flex-col items-center rounded-t-[3px] border border-b-0 border-[#d0d0d0] bg-[#f7f7f7] pt-[1px]">
                <span className="self-end pr-[2px] text-[5px] leading-[6px] text-[#aaa]">●</span>
                <Svg w={16} h={16}><circle cx="6.500" cy="6.500" r="5.500" stroke="#aaa" /><circle cx="6.500" cy="6.500" r="3" stroke="#bbb" /><text x="9" y="15" fontSize="6" fontWeight="700" fill="#999">2D</text></Svg>
                <span className="text-[5px] text-[#666]">▾</span>
                <span className="my-[3px] h-px w-[17px] bg-[#ddd]" />
                <Svg w={14} h={13}><rect x="1" y="1" width="8" height="8" fill="#a8cf9a" stroke="#7fae70" /><circle cx="9" cy="9" r="2.500" stroke="#888" /><path d="m11 11 2 2" stroke="#888" /></Svg>
                <span className="mt-[4px] text-[5px] text-[#666]">▾</span>
              </div>
              {/* Tooltip */}
              <div className="absolute left-[494px] top-[74px] flex h-[13px] w-[206px] items-center whitespace-nowrap border border-[#c8c8c8] bg-[#f6f6f6] pl-[2px] text-[8.100px] text-[#444] shadow-[1px_1px_1px_rgba(0,0,0,0.15)]">
                Title Blocks : D 22 x 34 Horizontal : D 22 x 34 Horizontal
              </div>
            </div>
          </div>
        </div>

        {/* Status bar */}
        <div className="flex h-[15px] shrink-0 items-center bg-[#dadada] text-[8.500px]">
          <span className="w-[178px] whitespace-nowrap pl-[1px] pt-[1px] text-[8.100px] text-[#333]">Title Blocks : D 22 x 34 Horizontal : D 22 x 34 Ho</span>
          <Svg w={12} h={12}><path d="M1 5h4v6H1zM7 5h4v6H7z" stroke="#2e6da4" /><path d="M3 5V1M9 5V1" stroke="#5a9a4a" strokeWidth="1.500" /></Svg>
          <div className="ml-[6px] flex h-[14px] w-[146px] items-center justify-end bg-white pr-[3px]"><Svg w={7} h={5}><path d="M1 1l2.500 2.500L6 1" stroke="#aaa" /></Svg></div>
          <Cell className="ml-[5px] w-[9px]"><Svg w={9} h={11}><path d="M2 1h5v4H5v5H3V5H2z" stroke="#999" /></Svg></Cell>
          <span className="ml-[4px] w-[23px] text-[8.500px]">:0</span>
          <Cell className="w-[11px]"><Svg w={10} h={11}><rect x="1" y="1" width="8" height="9" stroke="#333" fill="#fff" /><path d="M1 3.500h8M4 3.500V10" stroke="#333" /></Svg></Cell>
          <Cell className="ml-[7px] w-[11px]"><Svg w={10} h={11}><rect x="1" y="1" width="8" height="9" fill="#aaa" /></Svg></Cell>
          <div className="ml-[7px] flex h-[14px] w-[142px] items-center justify-between bg-white pl-[1px] pr-[3px] text-[8.500px] text-[#888]">
            <span>Main Model</span>
            <Svg w={7} h={5}><path d="M1 1l2.500 2.500L6 1" stroke="#aaa" /></Svg>
          </div>
          <div className="relative z-10 ml-[163px] flex items-center gap-[8px]">
            <Svg w={10} h={10}><circle cx="5" cy="4" r="3" fill="#d8a93a" /><path d="M5 6v4" stroke="#3d8a55" strokeWidth="1.500" /></Svg>
            <Svg w={11} h={11}><path d="M1 10 8 2v8z" stroke="#2e6da4" /><path d="M7 1l3 3m0-3L7 4" stroke="#c33" /></Svg>
            <Svg w={10} h={10}><path d="M1 5 5 1l4 4-4 4z" fill="#d8a070" /></Svg>
            <Svg w={10} h={11}><rect x="1" y="3" width="6" height="7" stroke="#2e6da4" /><path d="M6 1l3 3m0-3L6 4" stroke="#c33" /></Svg>
            <Svg w={10} h={11}><path d="M2 1v8l2-2 2 3 1-1-2-3h3z" fill="#333" /></Svg>
            <Svg w={10} h={10}><circle cx="5" cy="5" r="3.500" stroke="#aaa" strokeWidth="1.500" /></Svg>
            <Svg w={10} h={10}><path d="M1 1h8L6 5v4L4 8V5z" stroke="#888" /></Svg>
          </div>
          <span className="relative z-10 ml-[1px] text-[7px]">:1</span>
        </div>

        {/* Taskbar */}
        <div className="relative z-10 flex h-[22px] shrink-0 items-stretch bg-[#2c1a45] text-[9px] text-[#eee]">
          <Cell className="ml-[5px] w-[14px]"><Svg w={12} h={12}><path d="M0 2 5 1.300V5.500H0zM6 1.200 12 .300V5.500H6zM0 6.500H5V10.700L0 10zM6 6.500H12V11.700L6 10.800z" fill="#fff" /></Svg></Cell>
          <Cell className="ml-[13px] w-[14px]"><Svg w={12} h={12}><circle cx="7.500" cy="4.500" r="3.700" stroke="#ddd" /><path d="M5 7.500 1 11.500" stroke="#ddd" /></Svg></Cell>
          {[
            <Svg key="f" w={12} h={11}><path d="M0 1h5l1 2h6v8H0z" fill="#e8bf4a" /><rect x="0" y="5" width="12" height="6" fill="#f0d272" /><rect x="3" y="7" width="6" height="2" fill="#3b7ea8" /></Svg>,
            <Svg key="p" w={12} h={11}><path d="M1 6c2-5 8-5 10-3l-4 3 2 3c-3 2-7 1-8-3z" fill="#e9c7d0" /><circle cx="9" cy="8" r="2" fill="#3b6ea8" /></Svg>,
            <Chrome key="c" />,
          ].map((ic, i) => (
            <div key={i} className="ml-[15px] flex w-[11px] items-center justify-center first:ml-[14px]">{ic}</div>
          ))}
          <div className="ml-[7px] flex w-[25px] items-center justify-center bg-[#4a3a5e] text-[12px] font-bold text-[#3d7ec2]">R</div>
          <Cell className="ml-[7px] w-[11px]"><Chrome /></Cell>
          <div className="flex-1" />
          <Cell className="w-[14px]"><Svg w={13} h={13}><circle cx="6.500" cy="6.500" r="6" fill="#f0a81e" /><circle cx="7" cy="6.500" r="3.500" fill="#e8eef5" /></Svg></Cell>
          <span className="ml-[5px] flex items-center whitespace-nowrap text-[10.200px]">56°F&nbsp; Mostly su...</span>
          <Cell className="ml-[4px] w-[10px]"><Svg w={9} h={6}><path d="M1 5 4.500 1 8 5" stroke="#eee" /></Svg></Cell>
          <Cell className="ml-[7px] w-[8px]"><Svg w={6} h={11}><rect x="1" y="0.500" width="4" height="7" rx="2" fill="#eee" /><path d="M3 8v3" stroke="#eee" /></Svg></Cell>
          <Cell className="ml-[10px] w-[11px]"><Svg w={11} h={10}><rect x="0.500" y="0.500" width="9" height="6" stroke="#eee" /><path d="M5 7v2M2 9.500h6" stroke="#eee" /></Svg></Cell>
          <Cell className="ml-[7px] w-[10px]"><Svg w={10} h={9}><path d="M1 3h2l2-2v7L3 6H1z" stroke="#eee" /><path d="M7 2.500c1 1 1 3 0 4" stroke="#eee" /></Svg></Cell>
          <span className="ml-[5px] mr-[8px] flex items-center whitespace-nowrap text-[8.700px]">11:30 AM</span>
        </div>

        {/* Watermark */}
        <div className="pointer-events-none absolute left-[555px] top-[655px] h-[43px] w-[335px] bg-black/15 blur-[10px]" />
        <div className="pointer-events-none absolute left-[560px] top-[634px] z-20 flex items-start">
          <div className="mt-[15px]"><Logo /></div>
          <div className="ml-[7px] flex flex-col text-white/90 [text-shadow:0_0_6px_rgba(120,120,120,0.55)]">
            <span className="whitespace-nowrap text-[20px] leading-[21px] tracking-[0.8px] text-white/85">MADE WITH</span>
            <span className="whitespace-nowrap text-[38px] font-bold leading-[38px] tracking-[0.6px]">Screencastify</span>
          </div>
        </div>
      </div>
      <div className="w-[190px] shrink-0 bg-black" />
    </div>
  );
}
